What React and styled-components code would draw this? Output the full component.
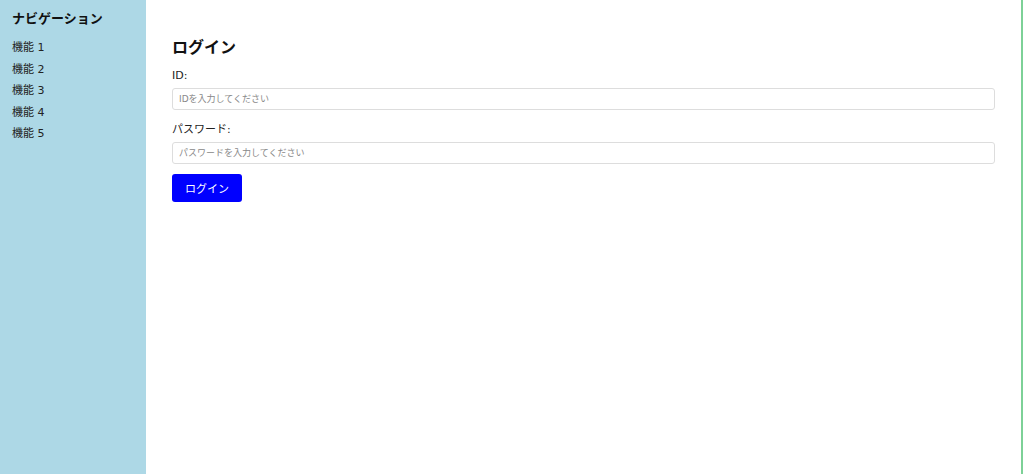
import React from "react";
import styled, { createGlobalStyle } from "styled-components";

const GlobalStyle = createGlobalStyle`
  html, body { margin: 0; padding: 0; background: #fff; }
  body { font-family: "DejaVu Sans", "Noto Sans CJK JP", sans-serif; color: #222; }
  * { box-sizing: border-box; }
`;

const Layout = styled.div`
  display: flex;
  height: 474px;
  margin-right: 1px;
`;

const Sidebar = styled.nav`
  width: 146px;
  flex-shrink: 0;
  background: #add8e6;
  padding: 9px 12px;
`;

const NavTitle = styled.h2`
  margin: 0 0 8px;
  font-size: 13px;
  font-weight: 700;
  line-height: 20px;
  color: #111;
`;

const NavList = styled.ul`
  list-style: none;
  margin: 0;
  padding: 0;
`;

const NavItem = styled.li`
  font-size: 11px;
  line-height: 21.6px;
  color: #222;
`;

const Main = styled.main`
  flex: 1;
  padding: 36px 26px 20px;
  border-right: 2px solid #7dd197;
`;

const Title = styled.h1`
  margin: 0 0 7px;
  font-size: 16px;
  font-weight: 700;
  line-height: 24px;
  color: #111;
`;

const Field = styled.div`
  display: flex;
  flex-direction: column;
  margin-bottom: ${(p) => p.$gap || 10}px;
`;

const Label = styled.label`
  font-size: 11px;
  line-height: 18px;
  margin-bottom: 3px;
  color: #222;
`;

const Input = styled.input`
  height: 22px;
  padding: 0 6px;
  border: 1px solid #ddd;
  border-radius: 3px;
  font-family: inherit;
  font-size: 9px;
  color: #222;
  outline: none;
  &::placeholder { color: #888; }
`;

const Button = styled.button`
  width: 70px;
  height: 28px;
  background: #0000ff;
  color: #fff;
  border: none;
  border-radius: 3px;
  font-family: inherit;
  font-size: 11px;
  cursor: pointer;
`;

export default function App() {
  return (
    <>
      <GlobalStyle />
      <Layout>
        <Sidebar>
          <NavTitle>ナビゲーション</NavTitle>
          <NavList>
            {[1, 2, 3, 4, 5].map((n) => (
              <NavItem key={n}>機能 {n}</NavItem>
            ))}
          </NavList>
        </Sidebar>
        <Main>
          <Title>ログイン</Title>
          <Field $gap={11}>
            <Label>ID:</Label>
            <Input placeholder="IDを入力してください" />
          </Field>
          <Field $gap={10}>
            <Label>パスワード:</Label>
            <Input type="password" placeholder="パスワードを入力してください" />
          </Field>
          <Button>ログイン</Button>
        </Main>
      </Layout>
    </>
  );
}
